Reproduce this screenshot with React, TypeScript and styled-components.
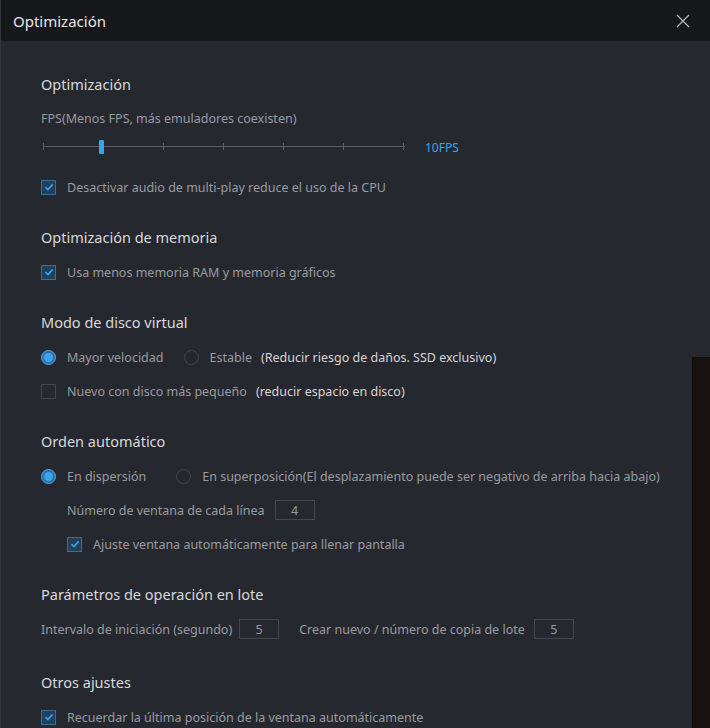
import React, { useState } from 'react';
import styled, { createGlobalStyle } from 'styled-components';

const GlobalStyle = createGlobalStyle`
    html, body {
        margin: 0;
        padding: 0;
        background: #1b1c20;
    }
    body {
        font-family: 'Noto Sans', 'Liberation Sans', sans-serif;
    }
`;

const blue = '#3ba4ee';

const Window = styled.div`
    position: relative;
    width: 710px;
    height: 728px;
    overflow: hidden;
    background-color: #26282f;
    border-left: 1px solid #34363e;
    box-sizing: border-box;
    display: flex;
    flex-direction: column;
`;

const TitleBar = styled.div`
    height: 41px;
    flex-shrink: 0;
    background-color: #17181c;
    display: flex;
    align-items: center;
    justify-content: space-between;
    padding: 0 20px 0 12px;
`;

const Title = styled.span`
    color: #e6e6e6;
    font-size: 15px;
`;

const CloseButton = styled.button`
    background: none;
    border: none;
    padding: 0;
    display: flex;
    cursor: pointer;
`;

const Body = styled.div`
    flex: 1;
    padding: 31px 0 0 40px;
    display: flex;
    flex-direction: column;
`;

const Section = styled.div`
    display: flex;
    flex-direction: column;
    margin-bottom: 16px;
`;

const SectionTitle = styled.div`
    color: #d8d8da;
    font-size: 14.5px;
    height: 24px;
    line-height: 24px;
    margin-bottom: 11px;
`;

const Row = styled.div<{ indent?: boolean }>`
    display: flex;
    align-items: center;
    height: 24px;
    margin-bottom: 10px;
    padding-left: ${({ indent }) => (indent ? '26px' : '0')};
`;

const Label = styled.span<{ bright?: boolean; gap?: number }>`
    color: ${({ bright }) => (bright ? '#d6d6d6' : '#9a9ba0')};
    font-size: 12.5px;
    white-space: nowrap;
    margin-left: ${({ gap }) => (gap ?? 0)}px;
`;

const Hint = styled.div`
    color: #9a9ba0;
    font-size: 12.5px;
    height: 20px;
    line-height: 20px;
    margin: 2px 0 8px;
`;

const SliderRow = styled.div`
    display: flex;
    align-items: center;
    height: 20px;
    margin-bottom: 18px;
`;

const Track = styled.div`
    position: relative;
    width: 362px;
    height: 14px;
    margin-left: 2px;
`;

const TrackLine = styled.div`
    position: absolute;
    left: 0;
    right: 0;
    top: 6px;
    height: 1px;
    background: #5c5e66;
`;

const Tick = styled.div`
    position: absolute;
    top: 3px;
    width: 1px;
    height: 7px;
    background: #5c5e66;
`;

const Thumb = styled.div`
    position: absolute;
    top: 0;
    width: 5px;
    height: 14px;
    margin-left: -2px;
    border-radius: 1px;
    background: ${blue};
`;

const SliderValue = styled.span`
    color: ${blue};
    font-size: 12px;
    margin-left: 20px;
`;

const Box = styled.span<{ checked?: boolean }>`
    width: 15px;
    height: 15px;
    box-sizing: border-box;
    border: 1px solid ${({ checked }) => (checked ? '#3a6f98' : '#45474f')};
    background: ${({ checked }) => (checked ? '#23405a' : 'transparent')};
    display: inline-flex;
    align-items: center;
    justify-content: center;
    flex-shrink: 0;
    margin-right: 11px;
`;

const Radio = styled.span<{ checked?: boolean }>`
    width: 15px;
    height: 15px;
    box-sizing: border-box;
    border-radius: 50%;
    border: 1px solid ${({ checked }) => (checked ? '#4aa9f0' : '#45474f')};
    background: ${({ checked }) => (checked ? '#2f6fa6' : 'transparent')};
    display: inline-flex;
    align-items: center;
    justify-content: center;
    flex-shrink: 0;
    margin-right: 11px;
    &::after {
        content: '';
        display: ${({ checked }) => (checked ? 'block' : 'none')};
        width: 9px;
        height: 9px;
        border-radius: 50%;
        background: ${blue};
    }
`;

const NumberBox = styled.span<{ gap?: number }>`
    width: 40px;
    height: 20px;
    box-sizing: border-box;
    border: 1px solid #45474f;
    color: #9a9ba0;
    font-size: 12.5px;
    display: inline-flex;
    align-items: center;
    justify-content: center;
    margin-left: ${({ gap }) => (gap ?? 8)}px;
`;

const Backdrop = styled.div`
    position: absolute;
    right: 0;
    top: 357px;
    width: 17px;
    bottom: 0;
    background: #171210;
    border-left: 1px solid #0e0c0b;
`;

const Check: React.FC<{ checked?: boolean }> = ({ checked }) => (
    <Box checked={checked}>
        {checked && (
            <svg width="10" height="10" viewBox="0 0 10 10">
                <path d="M1.5 5.2 L4 7.6 L8.6 2.4" fill="none" stroke={blue} strokeWidth="1.6" />
            </svg>
        )}
    </Box>
);

const ticks = [0, 60, 120, 180, 240, 300, 360];

export default function App() {
    const [fps] = useState(58);

    return (
        <Window>
            <GlobalStyle />
            <TitleBar>
                <Title>Optimización</Title>
                <CloseButton>
                    <svg width="14" height="14" viewBox="0 0 14 14">
                        <path d="M1 1 L13 13 M13 1 L1 13" stroke="#b4b4b8" strokeWidth="1.3" />
                    </svg>
                </CloseButton>
            </TitleBar>
            <Body>
                <Section>
                    <SectionTitle>Optimización</SectionTitle>
                    <Hint>FPS(Menos FPS, más emuladores coexisten)</Hint>
                    <SliderRow>
                        <Track>
                            <TrackLine />
                            {ticks.map((t) => (
                                <Tick key={t} style={{ left: t }} />
                            ))}
                            <Thumb style={{ left: fps }} />
                        </Track>
                        <SliderValue>10FPS</SliderValue>
                    </SliderRow>
                    <Row>
                        <Check checked />
                        <Label>Desactivar audio de multi-play reduce el uso de la CPU</Label>
                    </Row>
                </Section>

                <Section>
                    <SectionTitle>Optimización de memoria</SectionTitle>
                    <Row>
                        <Check checked />
                        <Label>Usa menos memoria RAM y memoria gráficos</Label>
                    </Row>
                </Section>

                <Section>
                    <SectionTitle>Modo de disco virtual</SectionTitle>
                    <Row>
                        <Radio checked />
                        <Label>Mayor velocidad</Label>
                        <Radio style={{ marginLeft: 20 }} />
                        <Label>Estable</Label>
                        <Label bright gap={9}>
                            (Reducir riesgo de daños. SSD exclusivo)
                        </Label>
                    </Row>
                    <Row>
                        <Check />
                        <Label>Nuevo con disco más pequeño</Label>
                        <Label bright gap={9}>
                            (reducir espacio en disco)
                        </Label>
                    </Row>
                </Section>

                <Section>
                    <SectionTitle>Orden automático</SectionTitle>
                    <Row>
                        <Radio checked />
                        <Label>En dispersión</Label>
                        <Radio style={{ marginLeft: 30 }} />
                        <Label>En superposición(El desplazamiento puede ser negativo de arriba hacia abajo)</Label>
                    </Row>
                    <Row indent>
                        <Label>Número de ventana de cada línea</Label>
                        <NumberBox gap={10}>4</NumberBox>
                    </Row>
                    <Row indent>
                        <Check checked />
                        <Label>Ajuste ventana automáticamente para llenar pantalla</Label>
                    </Row>
                </Section>

                <Section>
                    <SectionTitle>Parámetros de operación en lote</SectionTitle>
                    <Row>
                        <Label>Intervalo de iniciación (segundo)</Label>
                        <NumberBox gap={7}>5</NumberBox>
                        <Label gap={20}>Crear nuevo / número de copia de lote</Label>
                        <NumberBox gap={9}>5</NumberBox>
                    </Row>
                </Section>

                <Section style={{ marginTop: 3 }}>
                    <SectionTitle>Otros ajustes</SectionTitle>
                    <Row>
                        <Check checked />
                        <Label>Recuerdar la última posición de la ventana automáticamente</Label>
                    </Row>
                </Section>
            </Body>
            <Backdrop />
        </Window>
    );
}
